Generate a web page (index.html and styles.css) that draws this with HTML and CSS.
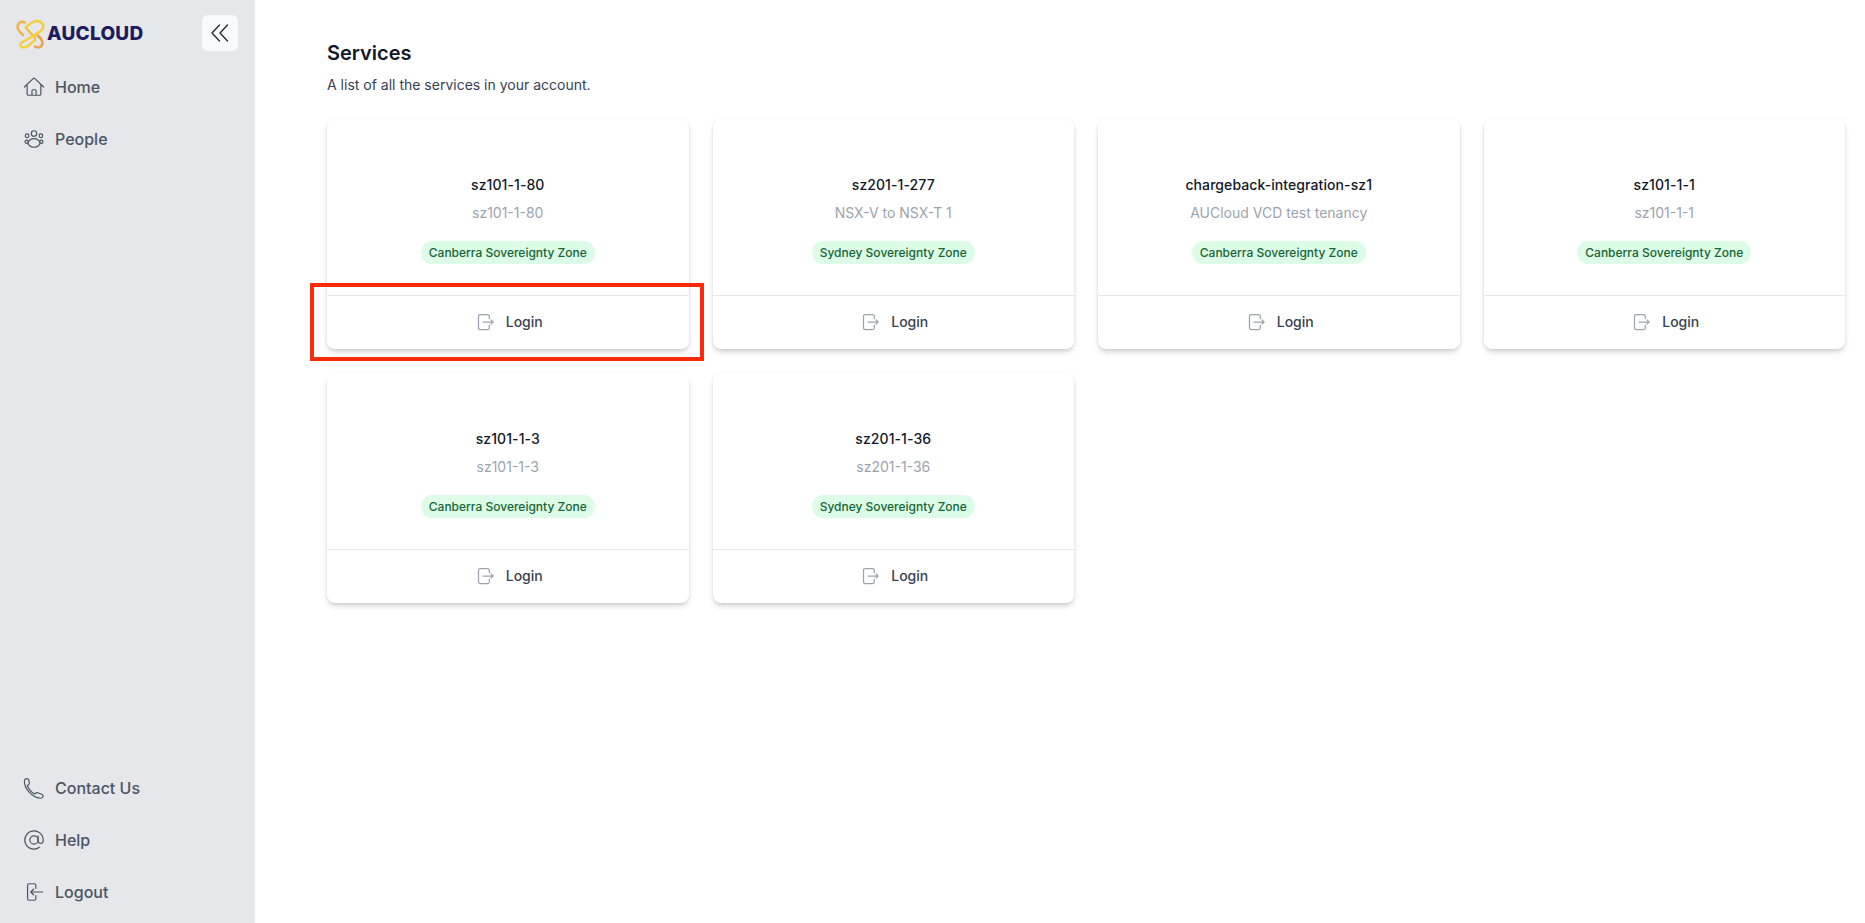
FILE: index.html
```html
<!DOCTYPE html>
<html>
<head>
    <title>Services</title>
    <link rel="stylesheet" href="styles.css">
</head>
<body>
    <svg class="sprites" width="0" height="0">
        <symbol id="i-login" viewBox="0 0 24 24">
            <path d="M16 8V5.200A2.200 2.200 0 0 0 13.800 3H5.200A2.200 2.200 0 0 0 3 5.200v13.600A2.200 2.200 0 0 0 5.200 21h8.600a2.200 2.200 0 0 0 2.200-2.200V16"/>
            <path d="M8.500 12h12M18 9.500l2.500 2.500-2.500 2.500"/>
        </symbol>
    </svg>

    <div class="layout">
        <aside class="sidebar">
            <div class="brand">
                <div class="logo">
                    <svg class="logo-mark" viewBox="0 0 30 30" width="30" height="30">
                        <g fill="none" stroke-width="2.500" stroke-linecap="round">
                            <path d="M9 3.500C5 1.500 1.500 4 1.500 8c0 3 2.500 5 5.500 8" stroke="#f0b446"/>
                            <path d="M10 9l9 10" stroke="#f2bf3e"/>
                            <path d="M20 15c4 3.500 7 6 6.500 9.500-.5 3.500-4.500 5-7.500 3" stroke="#e9a44c"/>
                            <path d="M9.500 8.500C13 5.500 17 1.500 22 2c4 .5 6 4 5 7-1 3-5 5-9 7.500l-8 4.500c-4 2-6.500 3.500-5.500 5.500 1 2.500 4.500 2.500 7.500.5l7-6" stroke="#f6d03c"/>
                        </g>
                    </svg>
                    <span class="logo-text">AUCLOUD</span>
                </div>
                <button class="collapse" type="button">
                    <svg viewBox="0 0 24 24" width="24" height="24"><path d="M11.500 4 4 12l7.500 8M19.500 4 12 12l7.500 8"/></svg>
                </button>
            </div>

            <nav class="nav">
                <a class="nav-item" href="#">
                    <svg viewBox="0 0 24 24" width="22" height="22"><path d="M1.500 12 11 2.800a1.400 1.400 0 0 1 2 0l9.500 9.200M4.500 9.500v10A1.500 1.500 0 0 0 6 21h12a1.500 1.500 0 0 0 1.500-1.500v-10M9.800 21v-5a1 1 0 0 1 1-1h2.400a1 1 0 0 1 1 1v5"/></svg>
                    Home
                </a>
                <a class="nav-item" href="#">
                    <svg viewBox="0 0 24 24" width="22" height="22"><circle cx="12" cy="6" r="3"/><circle cx="4.500" cy="8.500" r="2"/><circle cx="19.500" cy="8.500" r="2"/><circle cx="4" cy="15" r="1.800"/><circle cx="20" cy="15" r="1.800"/><path d="M5.500 16c1-3 3.500-4.500 6.500-4.500s5.500 1.500 6.500 4.500c.5 2.500-2.500 5-6.500 5s-7-2.500-6.500-5Z"/></svg>
                    People
                </a>
            </nav>

            <nav class="nav nav-bottom">
                <a class="nav-item" href="#">
                    <svg viewBox="0 0 24 24" width="22" height="22"><path d="M1.500 4.500C1.500 2.800 3 1.500 4.500 1.800c1.200.2 1.800 1 2 2.200l.4 2.500c.1.800-.2 1.500-.9 2l-1.300 1c1.500 3.500 4.500 7 8 9l1.300-1c.7-.5 1.500-.6 2.200-.3l3.500 1.300c1.500.6 2.500 1.800 2.200 2.900-.3 1.200-1.500 1.800-3 1.800C9 22.200 1.500 12 1.500 4.500Z"/></svg>
                    Contact Us
                </a>
                <a class="nav-item" href="#">
                    <svg viewBox="0 0 24 24" width="22" height="22"><circle cx="12" cy="12" r="4.500"/><path d="M16.500 7.500V13.500a2.800 2.800 0 0 0 5.500 0V12a10 10 0 1 0-4 8"/></svg>
                    Help
                </a>
                <a class="nav-item" href="#">
                    <svg viewBox="0 0 24 24" width="22" height="22"><path d="M14 8V5a2 2 0 0 0-2-2H7a2 2 0 0 0-2 2v14a2 2 0 0 0 2 2h5a2 2 0 0 0 2-2v-3M21.500 12H8.500M11.500 9l-3 3 3 3"/></svg>
                    Logout
                </a>
            </nav>
        </aside>

        <main class="content">
            <h1 class="title">Services</h1>
            <p class="subtitle">A list of all the services in your account.</p>

            <div class="cards">
                <div class="card">
                    <div class="card-body">
                        <h3 class="card-name">sz101-1-80</h3>
                        <p class="card-desc">sz101-1-80</p>
                        <span class="badge">Canberra Sovereignty Zone</span>
                    </div>
                    <a class="card-action" href="#"><svg width="20" height="20"><use href="#i-login"/></svg>Login</a>
                    <div class="highlight"></div>
                </div>
                <div class="card">
                    <div class="card-body">
                        <h3 class="card-name">sz201-1-277</h3>
                        <p class="card-desc">NSX-V to NSX-T 1</p>
                        <span class="badge">Sydney Sovereignty Zone</span>
                    </div>
                    <a class="card-action" href="#"><svg width="20" height="20"><use href="#i-login"/></svg>Login</a>
                </div>
                <div class="card">
                    <div class="card-body">
                        <h3 class="card-name">chargeback-integration-sz1</h3>
                        <p class="card-desc">AUCloud VCD test tenancy</p>
                        <span class="badge">Canberra Sovereignty Zone</span>
                    </div>
                    <a class="card-action" href="#"><svg width="20" height="20"><use href="#i-login"/></svg>Login</a>
                </div>
                <div class="card">
                    <div class="card-body">
                        <h3 class="card-name">sz101-1-1</h3>
                        <p class="card-desc">sz101-1-1</p>
                        <span class="badge">Canberra Sovereignty Zone</span>
                    </div>
                    <a class="card-action" href="#"><svg width="20" height="20"><use href="#i-login"/></svg>Login</a>
                </div>
                <div class="card">
                    <div class="card-body">
                        <h3 class="card-name">sz101-1-3</h3>
                        <p class="card-desc">sz101-1-3</p>
                        <span class="badge">Canberra Sovereignty Zone</span>
                    </div>
                    <a class="card-action" href="#"><svg width="20" height="20"><use href="#i-login"/></svg>Login</a>
                </div>
                <div class="card">
                    <div class="card-body">
                        <h3 class="card-name">sz201-1-36</h3>
                        <p class="card-desc">sz201-1-36</p>
                        <span class="badge">Sydney Sovereignty Zone</span>
                    </div>
                    <a class="card-action" href="#"><svg width="20" height="20"><use href="#i-login"/></svg>Login</a>
                </div>
            </div>
        </main>
    </div>
</body>
</html>
```

FILE: styles.css
```css
* {
    box-sizing: border-box;
}

html, body {
    height: 100%;
}

body {
    margin: 0;
    font-family: Inter, "Liberation Sans", sans-serif;
    background-color: #fff;
    color: #111827;
}

svg {
    fill: none;
    stroke: currentColor;
    stroke-linecap: round;
    stroke-linejoin: round;
    stroke-width: 1.3;
    flex-shrink: 0;
}

.sprites {
    position: absolute;
}

.layout {
    display: flex;
    height: 923px;
    overflow: hidden;
}

/* Sidebar */
.sidebar {
    width: 255px;
    flex-shrink: 0;
    display: flex;
    flex-direction: column;
    background-color: #e5e7eb;
    padding: 15px 16px 0 16px;
}

.brand {
    display: flex;
    align-items: center;
    justify-content: space-between;
    height: 36px;
    padding-right: 1px;
}

.logo {
    display: flex;
    align-items: center;
    gap: 1px;
}

.logo-mark {
    stroke: none;
    margin-top: 2px;
}

.logo-text {
    font-size: 19px;
    font-weight: 800;
    color: #1e1b5e;
    letter-spacing: 0.25px;
}

.collapse {
    width: 36px;
    height: 36px;
    display: flex;
    align-items: center;
    justify-content: center;
    background-color: #f9fafb;
    border: none;
    border-radius: 6px;
    padding: 0;
    color: #1f2937;
}

.nav {
    display: flex;
    flex-direction: column;
    gap: 20px;
    margin-top: 20px;
}

.nav-bottom {
    margin-top: auto;
    margin-bottom: 15px;
}

.nav-item {
    display: flex;
    align-items: center;
    gap: 10px;
    height: 32px;
    padding-left: 7px;
    font-size: 16px;
    font-weight: 500;
    line-height: 32px;
    color: #4b5563;
    text-decoration: none;
}

/* Main content */
.content {
    flex: 1;
    min-width: 0;
    padding: 39px 20px 0 72px;
}

.title {
    margin: 0;
    font-size: 20px;
    font-weight: 600;
    line-height: 28px;
    color: #111827;
}

.subtitle {
    margin: 8px 0 0 0;
    font-size: 14px;
    line-height: 20px;
    color: #374151;
}

.cards {
    display: grid;
    grid-template-columns: repeat(4, 1fr);
    gap: 24px;
    margin-top: 24px;
}

.card {
    position: relative;
    display: flex;
    flex-direction: column;
    height: 230px;
    background-color: #fff;
    border-radius: 8px;
    box-shadow: 0 4px 6px -1px rgba(0, 0, 0, 0.15), 0 2px 4px -1px rgba(0, 0, 0, 0.08), 0 0 3px rgba(0, 0, 0, 0.05);
}

.card-body {
    flex: 1;
    display: flex;
    flex-direction: column;
    align-items: center;
    padding-top: 56px;
    border-bottom: 1px solid #e5e7eb;
}

.card-name {
    margin: 0;
    font-size: 14px;
    font-weight: 500;
    line-height: 20px;
    color: #111827;
    letter-spacing: 0.08px;
}

.card-desc {
    margin: 8px 0 0 0;
    font-size: 14px;
    line-height: 20px;
    color: #9ca3af;
}

.badge {
    margin-top: 18px;
    padding: 2px 8px;
    font-size: 12px;
    font-weight: 500;
    line-height: 19px;
    color: #166534;
    background-color: #dcfce7;
    border-radius: 999px;
}

.card-action {
    height: 53px;
    display: flex;
    align-items: center;
    justify-content: center;
    gap: 10px;
    padding: 0 0 2px 3px;
    font-size: 14px;
    font-weight: 500;
    color: #374151;
    text-decoration: none;
}

.card-action svg {
    color: #9ca3af;
    stroke-width: 1.5;
}

.highlight {
    position: absolute;
    left: -17px;
    right: -15px;
    bottom: -12px;
    height: 78px;
    border: 4px solid #ff2a0a;
}
```
